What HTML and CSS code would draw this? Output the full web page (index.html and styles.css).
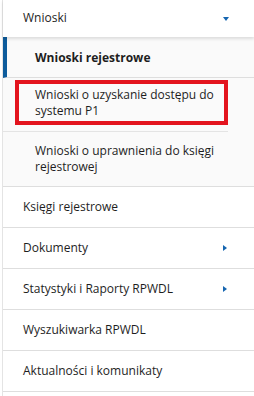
FILE: index.html
```html
<!DOCTYPE html>
<html lang="pl">
    <head>
        <meta charset="UTF-8" />
        <meta name="viewport" content="width=device-width, initial-scale=1.0" />
        <title>Menu</title>
        <link rel="stylesheet" href="styles.css" />
    </head>
    <body>
        <nav class="side-menu">
            <div class="menu-item menu-open">
                <span class="menu-label">Wnioski</span>
                <span class="caret caret-down"></span>
            </div>
            <ul class="submenu">
                <li class="sub-item active">Wnioski rejestrowe</li>
                <li class="sub-item focused"><span class="focus-box">Wnioski o uzyskanie dostępu do systemu P1</span></li>
                <li class="sub-item">Wnioski o uprawnienia do księgi rejestrowej</li>
            </ul>
            <div class="menu-item"><span class="menu-label">Księgi rejestrowe</span></div>
            <div class="menu-item">
                <span class="menu-label">Dokumenty</span>
                <span class="caret caret-right"></span>
            </div>
            <div class="menu-item">
                <span class="menu-label">Statystyki i Raporty RPWDL</span>
                <span class="caret caret-right"></span>
            </div>
            <div class="menu-item"><span class="menu-label">Wyszukiwarka RPWDL</span></div>
            <div class="menu-item"><span class="menu-label">Aktualności i komunikaty</span></div>
        </nav>
    </body>
</html>
```

FILE: styles.css
```css
body {
    margin: 0;
    font-family: "Open Sans", "Noto Sans", sans-serif;
    font-size: 12px;
    color: #1e1e1e;
    background-color: #fff;
}

.side-menu {
    margin-left: 2px;
    border-left: 1px solid #e4e4e4;
    min-height: 396px;
}

.menu-item {
    display: flex;
    align-items: center;
    justify-content: space-between;
    padding: 11px 25px 12px 20px;
    line-height: 17px;
    border-bottom: 1px solid #dedede;
}

.menu-open {
    padding-top: 9px;
    padding-bottom: 11px;
    border-bottom: none;
    position: relative;
    box-shadow: 0 2px 3px rgba(0, 0, 0, 0.12);
}

.caret {
    width: 0;
    height: 0;
    border-style: solid;
}

.caret-down {
    border-width: 4px 3.5px 0 3.5px;
    border-color: #1565b0 transparent transparent transparent;
    margin-top: 3px;
}

.caret-right {
    border-width: 3.5px 0 3.5px 4px;
    border-color: transparent transparent transparent #1565b0;
    margin-right: 2px;
}

.submenu {
    list-style: none;
    margin: 0;
    padding: 0;
    background-color: #fafafa;
}

.sub-item {
    padding: 11px 30px 11px 32px;
    line-height: 16px;
    border-bottom: 1px solid #dedede;
}

.sub-item.active {
    font-weight: bold;
    padding: 12px 0 11px 28px;
    line-height: 17px;
    border-left: 4px solid #0e5c9c;
}

.sub-item.focused {
    padding: 2px 0 6px 12px;
    margin-right: 26px;
    border-bottom-color: #e4e4e4;
}

.focus-box {
    display: block;
    border: 4px solid #e3141e;
    padding: 3px 4px 2px 16px;
}
```
